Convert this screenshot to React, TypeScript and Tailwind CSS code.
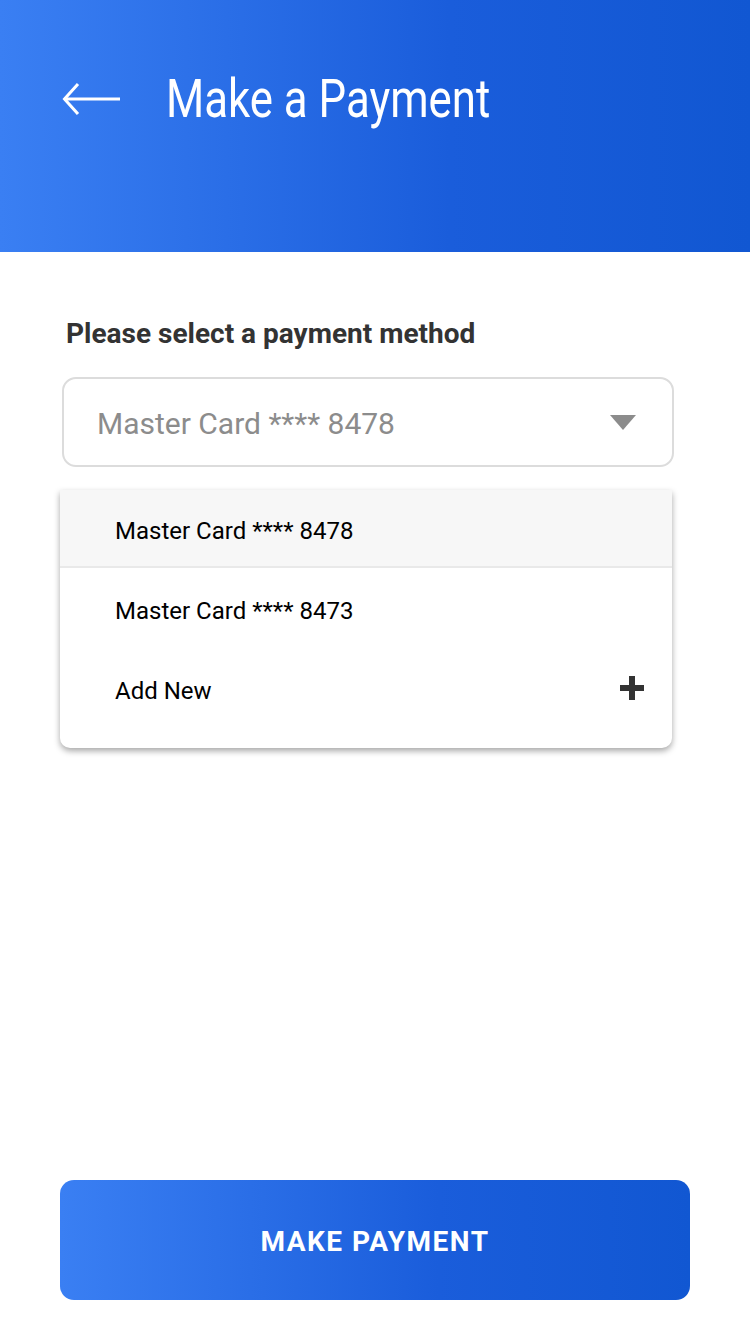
const font = { fontFamily: 'Roboto, "Noto Sans", sans-serif' };

function BackArrow() {
  return (
    <svg width="60" height="34" viewBox="0 0 60 34" fill="none" stroke="white" strokeWidth="3">
      <path d="M2 17 H58" />
      <path d="M16 2 L2.5 17 L16 32" strokeLinejoin="miter" />
    </svg>
  );
}

function Caret() {
  return (
    <svg width="26" height="15" viewBox="0 0 26 15">
      <path d="M0 0 H26 L13 15 Z" fill="#8c8c8c" />
    </svg>
  );
}

function Plus() {
  return (
    <svg width="24" height="24" viewBox="0 0 24 24">
      <path d="M9 0 H15 V9 H24 V15 H15 V24 H9 V15 H0 V9 H9 Z" fill="#333333" />
    </svg>
  );
}

export default function App() {
  return (
    <div className="w-[750px] h-[1334px] bg-white flex flex-col" style={font}>
      <header className="h-[252px] shrink-0 bg-gradient-to-r from-[#3a7ff3] via-[#1a5ddb] via-60% to-[#1157d2] flex items-start pt-[70px] pl-[62px]">
        <div className="flex items-center h-[58px]">
          <BackArrow />
          <h1 className="ml-[44px] text-white text-[53px] leading-none font-normal origin-left scale-x-[0.826] whitespace-nowrap">
            Make a Payment
          </h1>
        </div>
      </header>

      <main className="flex-1 flex flex-col px-[60px]">
        <p className="mt-[68px] ml-[6px] text-[28px] leading-none font-bold text-[#333333]">
          Please select a payment method
        </p>

        <div className="mt-[29px] ml-[2px] w-[612px] h-[90px] border-2 border-[#dcdcdc] rounded-[14px] flex items-center justify-between pl-[33px] pr-[36px]">
          <span className="text-[30px] text-[#8c8c8c] pt-[3px]">Master Card **** 8478</span>
          <Caret />
        </div>

        <div className="mt-[23px] w-[612px] bg-white rounded-b-[10px] shadow-[0_3px_6px_rgba(0,0,0,0.35)] overflow-hidden">
          <div className="h-[78px] bg-[#f7f7f7] border-b-2 border-[#e9e9e9] flex items-center pl-[55px] pt-[6px] text-[24px] text-black">
            Master Card **** 8478
          </div>
          <div className="h-[80px] flex items-center pl-[55px] pt-[6px] text-[24px] text-black">
            Master Card **** 8473
          </div>
          <div className="h-[80px] flex items-center justify-between pl-[55px] pr-[28px] text-[24px] text-black">
            <span className="pt-[6px]">Add New</span>
            <Plus />
          </div>
          <div className="h-[20px]" />
        </div>

        <div className="flex-1" />

        <button className="mb-[34px] h-[120px] w-[630px] rounded-[14px] bg-gradient-to-r from-[#3a7ff3] via-[#1a5ddb] via-60% to-[#1157d2] text-white text-[28px] font-bold tracking-[1.5px] pt-[4px]">
          MAKE PAYMENT
        </button>
      </main>
    </div>
  );
}
